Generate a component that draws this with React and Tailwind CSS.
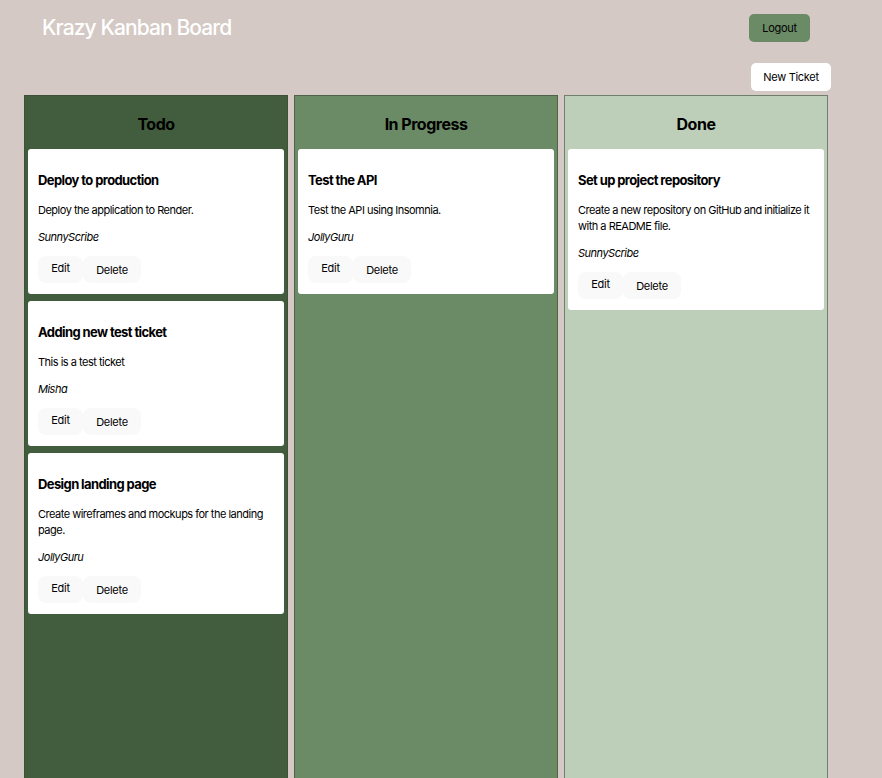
import React from "react";

const columns = [
  {
    title: "Todo",
    bg: "bg-[#425d3d]",
    tickets: [
      { name: "Deploy to production", desc: "Deploy the application to Render.", user: "SunnyScribe" },
      { name: "Adding new test ticket", desc: "This is a test ticket", user: "Misha" },
      { name: "Design landing page", desc: "Create wireframes and mockups for the landing page.", user: "JollyGuru" },
    ],
  },
  {
    title: "In Progress",
    bg: "bg-[#6b8a66]",
    tickets: [{ name: "Test the API", desc: "Test the API using Insomnia.", user: "JollyGuru" }],
  },
  {
    title: "Done",
    bg: "bg-[#bdcfb9]",
    tickets: [
      {
        name: "Set up project repository",
        desc: "Create a new repository on GitHub and initialize it with a README file.",
        user: "SunnyScribe",
      },
    ],
  },
];

function TicketCard({ ticket }) {
  return (
    <div className="bg-white rounded-[3px] px-[10px] pt-[23px] pb-[11px] text-black">
      <h3 className="text-[13px] font-bold leading-[16px] tracking-[-0.6px]">{ticket.name}</h3>
      <p className="mt-[14px] text-[11px] leading-[16px] tracking-[-0.5px]">{ticket.desc}</p>
      <p className="mt-[11px] text-[11px] leading-[16px] italic tracking-[-0.5px]">{ticket.user}</p>
      <div className="mt-[11px] flex tracking-[-0.3px]">
        <button className="h-[27px] w-[45px] rounded-lg bg-[#f9f9f9] text-[11px] pb-[2px]">Edit</button>
        <button className="h-[27px] w-[58px] rounded-lg bg-[#f9f9f9] text-[11px] pt-[1px]">Delete</button>
      </div>
    </div>
  );
}

export default function App() {
  return (
    <div
      className="min-h-[778px] bg-[#d4c9c4] overflow-hidden"
      style={{ fontFamily: "Inter, 'Noto Sans', sans-serif" }}
    >
      <header className="flex items-center justify-between pl-[42px] pr-[72px] pt-[14px]">
        <h1 className="text-[21px] font-medium text-white leading-[28px] -mt-[1px] tracking-[-0.9px]">
          Krazy Kanban Board
        </h1>
        <button className="h-[28px] w-[61px] rounded-[5px] bg-[#6b8a66] text-[11px] text-black tracking-[-0.3px]">
          Logout
        </button>
      </header>
      <div className="flex justify-end pr-[51px] mt-[21px]">
        <button className="h-[28px] w-[80px] rounded-[5px] bg-white text-[11px] text-black tracking-[-0.3px]">
          New Ticket
        </button>
      </div>
      <div className="flex gap-[6px] pl-[24px] mt-[4px]">
        {columns.map((col) => (
          <div key={col.title} className={`w-[264px] h-[700px] border border-[#3a4a37]/60 ${col.bg} px-[3px]`}>
            <h2 className="text-center text-[16px] font-bold text-black pt-[18px] pb-[15px] leading-[20px] tracking-[-0.5px]">
              {col.title}
            </h2>
            <div className="flex flex-col gap-[7px]">
              {col.tickets.map((t) => (
                <TicketCard key={t.name} ticket={t} />
              ))}
            </div>
          </div>
        ))}
      </div>
    </div>
  );
}
